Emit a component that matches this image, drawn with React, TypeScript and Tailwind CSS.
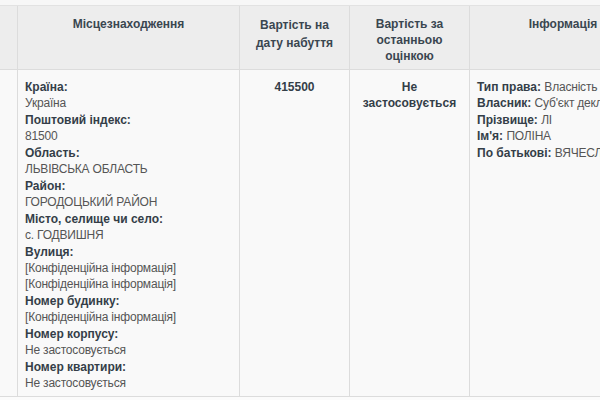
import React from "react";

const L = ({ k, v }: { k: string; v: string }) => (
  <>
    <div className="font-bold text-[#343e48]">{k}</div>
    <div className="text-[#555555] tracking-[-0.2px]">{v}</div>
  </>
);

const I = ({ k, v }: { k: string; v: string }) => (
  <div className="whitespace-nowrap">
    <span className="font-bold text-[#343e48]">{k}</span>{" "}
    <span className="text-[#555555] tracking-[-0.2px]">{v}</span>
  </div>
);

export default function App() {
  return (
    <div
      className="w-[600px] h-[400px] overflow-hidden bg-[#fbfbfb] text-[12px] leading-[16.45px]"
      style={{ fontFamily: '"Liberation Sans", Arial, sans-serif' }}
    >
      <div className="h-[6px] bg-[#f7f7f7] border-b border-[#e2e2e2]" />
      <div className="w-[740px] grid grid-cols-[18px_222px_110px_120px_270px]">
        {/* header */}
        <div className="h-[64px] bg-[#ededed] border-r border-[#dcdcdc] border-b" />
        <div className="h-[64px] bg-[#ededed] border-r border-[#dcdcdc] border-b text-center font-bold text-[#3a4650] pt-[10px]">
          Місцезнаходження
        </div>
        <div className="h-[64px] bg-[#ededed] border-r border-[#dcdcdc] border-b text-center font-bold text-[#3a4650] pt-[10px] leading-[18px] px-[12px]">
          Вартість на дату набуття
        </div>
        <div className="h-[64px] bg-[#ededed] border-r border-[#dcdcdc] border-b text-center font-bold text-[#3a4650] pt-[10px] leading-[16px] px-[20px]">
          Вартість за останньою оцінкою
        </div>
        <div className="h-[64px] bg-[#ededed] border-b border-[#dcdcdc] text-center font-bold text-[#3a4650] pt-[10px] whitespace-nowrap">
          Інформація про власника
        </div>

        {/* body */}
        <div className="h-[327px] bg-[#f9f9f9] border-r border-b border-[#dcdcdc]" />
        <div className="h-[327px] bg-[#f9f9f9] border-r border-b border-[#dcdcdc] pl-[7px] pt-[9px]">
          <L k="Країна:" v="Україна" />
          <L k="Поштовий індекс:" v="81500" />
          <L k="Область:" v="ЛЬВІВСЬКА ОБЛАСТЬ" />
          <L k="Район:" v="ГОРОДОЦЬКИЙ РАЙОН" />
          <L k="Місто, селище чи село:" v="с. ГОДВИШНЯ" />
          <div className="font-bold text-[#343e48]">Вулиця:</div>
          <div className="text-[#555555] tracking-[-0.2px]">[Конфіденційна інформація]</div>
          <div className="text-[#555555] tracking-[-0.2px]">[Конфіденційна інформація]</div>
          <L k="Номер будинку:" v="[Конфіденційна інформація]" />
          <L k="Номер корпусу:" v="Не застосовується" />
          <L k="Номер квартири:" v="Не застосовується" />
        </div>
        <div className="h-[327px] bg-[#f9f9f9] border-r border-b border-[#dcdcdc] text-center font-bold text-[#343e48] pt-[9px]">
          415500
        </div>
        <div className="h-[327px] bg-[#f9f9f9] border-r border-b border-[#dcdcdc] text-center font-bold text-[#343e48] pt-[9px] px-[6px]">
          Не застосовується
        </div>
        <div className="h-[327px] bg-[#f9f9f9] border-b border-[#dcdcdc] pl-[7px] pt-[9px]">
          <I k="Тип права:" v="Власність" />
          <I k="Власник:" v="Суб'єкт декларування" />
          <I k="Прізвище:" v="ЛІ" />
          <I k="Ім'я:" v="ПОЛІНА" />
          <I k="По батькові:" v="ВЯЧЕСЛАВІВНА" />
        </div>
      </div>
    </div>
  );
}
